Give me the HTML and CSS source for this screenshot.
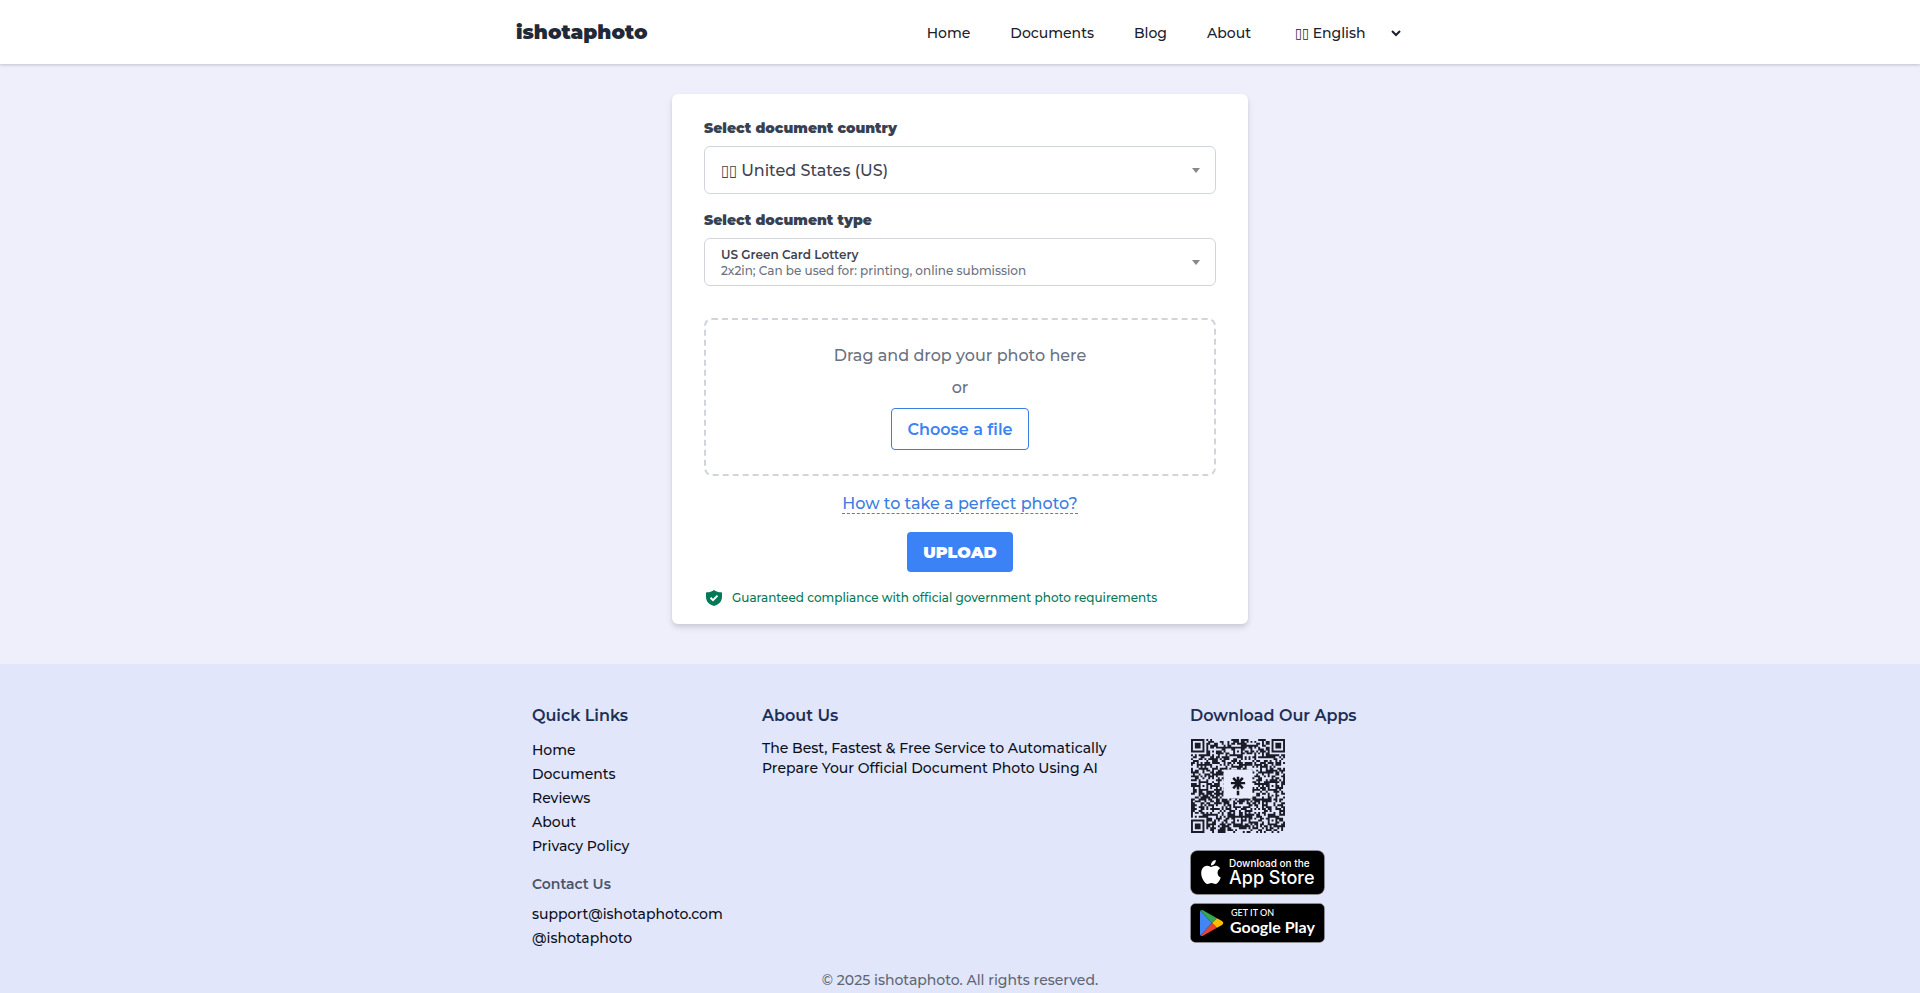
FILE: index.html
```
<!DOCTYPE html>
<html lang="en">
<head>
    <meta charset="UTF-8">
    <meta name="viewport" content="width=device-width, initial-scale=1.0">
    <title>ishotaphoto</title>
    <link rel="stylesheet" href="styles.css">
</head>
<body>
    <header class="header">
        <div class="header-inner">
            <a class="logo" href="#">ishotaphoto</a>
            <nav class="nav">
                <a href="#">Home</a>
                <a href="#">Documents</a>
                <a href="#">Blog</a>
                <a href="#">About</a>
                <select class="language" aria-label="Language">
                    <option>▯▯ English</option>
                </select>
            </nav>
        </div>
    </header>

    <main class="main">
        <form class="card">
            <label class="field-label" for="country">Select document country</label>
            <div class="field">
                <select id="country" class="field-select">
                    <option>▯▯ United States (US)</option>
                </select>
                <span class="field-arrow"></span>
            </div>

            <label class="field-label" for="docType">Select document type</label>
            <div class="field">
                <select id="docType" class="field-select field-select-small">
                    <option>US Green Card Lottery</option>
                </select>
                <span class="field-note">2x2in; Can be used for: printing, online submission</span>
                <span class="field-arrow"></span>
            </div>

            <div class="dropzone">
                <p>Drag and drop your photo here</p>
                <p>or</p>
                <button type="button" class="choose-button">Choose a file</button>
            </div>

            <div class="actions">
                <a class="help-link" href="#">How to take a perfect photo?</a>
                <button type="submit" class="upload-button">UPLOAD</button>
            </div>

            <div class="guarantee">
                <svg width="18" height="18" viewBox="0 0 18 18" aria-hidden="true">
                    <path fill="#047857" d="M9 1C7 2.600 4.500 3.300 1.700 3.300Q1 3.300 1 4V7.500C1 12.200 3.600 15.500 9 17C14.400 15.500 17 12.200 17 7.500V4Q17 3.300 16.300 3.300C13.500 3.300 11 2.600 9 1Z"/>
                    <path fill="none" stroke="#fff" stroke-width="2" d="M5.500 8.800L8 11.200L12.500 6.600"/>
                </svg>
                <span>Guaranteed compliance with official government photo requirements</span>
            </div>
        </form>
    </main>

    <footer class="footer">
        <div class="footer-inner">
            <div>
                <h2>Quick Links</h2>
                <ul class="links">
                    <li><a href="#">Home</a></li>
                    <li><a href="#">Documents</a></li>
                    <li><a href="#">Reviews</a></li>
                    <li><a href="#">About</a></li>
                    <li><a href="#">Privacy Policy</a></li>
                </ul>
                <h3>Contact Us</h3>
                <ul class="links">
                    <li><a href="#">support@ishotaphoto.com</a></li>
                    <li><a href="#">@ishotaphoto</a></li>
                </ul>
            </div>
            <div>
                <h2>About Us</h2>
                <p class="about">The Best, Fastest &amp; Free Service to Automatically Prepare Your Official Document Photo Using AI</p>
            </div>
            <div class="apps">
                <h2>Download Our Apps</h2>
                <svg class="qr" viewBox="0 0 49 49" role="img" aria-label="QR code">
                    <path id="qrModules" fill="#1b1c28"/>
                    <rect x="17" y="16" width="15" height="15" fill="#e7ebfb"/>
                    <path stroke="#14151f" stroke-width="1.300" d="M24.500 19.700V26.300M20.800 23H28.200M22 20.300L27 25.700M27 20.300L22 25.700M24.500 27V29.300"/>
                </svg>
                <a href="#" aria-label="Download on the App Store">
                    <svg class="badge" viewBox="0 0 135 45">
                        <rect x="0.500" y="0.500" width="134" height="44" rx="7" fill="#000" stroke="#a6a6a6" stroke-width="0.500"/>
                        <path transform="translate(9 10)" fill="#fff" d="M12.152 6.896c-.948 0-2.415-1.078-3.960-1.040-2.040.027-3.910 1.183-4.961 3.014-2.117 3.675-.546 9.103 1.519 12.090 1.013 1.454 2.208 3.090 3.792 3.039 1.520-.065 2.090-.987 3.935-.987 1.831 0 2.350.987 3.960.948 1.637-.026 2.676-1.480 3.676-2.948 1.156-1.688 1.636-3.325 1.662-3.415-.039-.013-3.182-1.221-3.220-4.857-.026-3.040 2.480-4.494 2.597-4.559-1.429-2.090-3.623-2.324-4.390-2.376-2-.156-3.675 1.090-4.610 1.090zM15.530 3.830c.843-1.012 1.400-2.427 1.245-3.830-1.207.052-2.662.805-3.532 1.818-.780.896-1.454 2.338-1.273 3.714 1.338.104 2.715-.688 3.559-1.701"/>
                        <text class="badge-small" x="39" y="17">Download on the</text>
                        <text class="badge-big" x="39" y="34">App Store</text>
                    </svg>
                </a>
                <a href="#" aria-label="Get it on Google Play">
                    <svg class="badge" viewBox="0 0 135 40">
                        <rect x="0.500" y="0.500" width="134" height="39" rx="5" fill="#000" stroke="#a6a6a6" stroke-width="0.500"/>
                        <path fill="#4285f4" d="M10.500 7.500Q10 8 10 9V31Q10 32 10.500 32.500L22 20Z"/>
                        <path fill="#34a853" d="M10.500 7.500Q11.500 6.500 13 7.300L27 15.200L22 20Z"/>
                        <path fill="#ea4335" d="M10.500 32.500Q11.500 33.500 13 32.700L27 24.800L22 20Z"/>
                        <path fill="#fbbc04" d="M27 15.200L32 18Q34.500 20 32 22L27 24.800L22 20Z"/>
                        <text class="badge-get" x="41" y="13">GET IT ON</text>
                        <text class="badge-play" x="40" y="30">Google Play</text>
                    </svg>
                </a>
            </div>
        </div>
        <p class="copyright">© 2025 ishotaphoto. All rights reserved.</p>
    </footer>

    <script src="script.js"></script>
</body>
</html>
```
FILE: styles.css
```
* {
    box-sizing: border-box;
}

body {
    margin: 0;
    font-family: Montserrat, "DejaVu Sans Condensed", Inter, sans-serif;
    font-size: 14px;
    line-height: 24px;
    font-weight: 500;
    color: #1a202c;
    background-color: #eeeffb;
}

a {
    color: inherit;
    text-decoration: none;
}

h2, h3, p, ul {
    margin: 0;
    padding: 0;
}

select, button {
    font-family: inherit;
    font-weight: inherit;
}

/* Header */
.header {
    background-color: #fff;
    box-shadow: 0 1px 3px rgba(0, 0, 0, 0.2);
}

.header-inner {
    display: flex;
    justify-content: space-between;
    align-items: center;
    max-width: 888px;
    height: 64px;
    margin: 0 auto;
}

.logo {
    font-size: 20px;
    font-weight: 900;
    color: #1f2937;
}

.nav {
    display: flex;
    align-items: center;
    gap: 40px;
    padding-top: 2px;
}

.language {
    width: 113px;
    border: none;
    background: none;
    font-size: 14px;
    color: #1a202c;
}

/* Upload card */
.main {
    padding: 30px 16px 40px;
}

.card {
    max-width: 576px;
    margin: 0 auto;
    padding: 22px 32px 14px;
    border-radius: 6px;
    background-color: #fff;
    box-shadow: 0 4px 6px rgba(0, 0, 0, 0.1), 0 2px 4px rgba(0, 0, 0, 0.06);
}

.field-label {
    display: block;
    margin-bottom: 6px;
    line-height: 24px;
    font-weight: 900;
    color: #374151;
}

.field {
    display: grid;
    align-items: center;
    height: 48px;
    margin-bottom: 14px;
    border: 1px solid #d1d5db;
    border-radius: 6px;
}

.field > * {
    grid-area: 1 / 1;
}

.field-select {
    appearance: none;
    width: 100%;
    height: 100%;
    padding: 0 36px 0 16px;
    border: none;
    background: none;
    font-size: 16px;
    color: #3f4350;
}

.field-select-small {
    padding-bottom: 16px;
    font-size: 12px;
    font-weight: 600;
}

.field-note {
    padding: 18px 36px 0 16px;
    font-size: 12px;
    line-height: 16px;
    color: #6b7280;
    pointer-events: none;
}

.field-arrow {
    justify-self: end;
    margin-right: 15px;
    border-top: 5px solid #888;
    border-left: 4px solid transparent;
    border-right: 4px solid transparent;
    pointer-events: none;
}

.dropzone {
    display: flex;
    flex-direction: column;
    align-items: center;
    gap: 8px;
    margin-top: 32px;
    padding: 24px 16px;
    border: 2px dashed #d1d5db;
    border-radius: 8px;
    font-size: 16px;
    color: #6b7280;
}

.choose-button {
    height: 42px;
    padding: 0 16px;
    border: 1px solid #3b7de0;
    border-radius: 4px;
    background-color: #fff;
    font-size: 16px;
    font-weight: 600;
    color: #3b82f6;
}

.actions {
    display: flex;
    flex-direction: column;
    align-items: center;
    gap: 18px;
    padding: 18px 0 14px;
}

.help-link {
    border-bottom: 1px dashed #3b82f6;
    font-size: 16px;
    line-height: 19px;
    color: #3b7de0;
}

.upload-button {
    height: 40px;
    padding: 0 16px;
    border: none;
    border-radius: 4px;
    background-color: #3b82f6;
    font-size: 16px;
    font-weight: 900;
    color: #fff;
}

.guarantee {
    display: flex;
    align-items: center;
    gap: 9px;
    padding-left: 1px;
    font-size: 12px;
    color: #047857;
}

/* Footer */
.footer {
    padding: 40px 16px 1px;
    background-color: #e1e6fa;
    color: #0b0f19;
}

.footer-inner {
    display: grid;
    grid-template-columns: 230fr 428fr 198fr;
    max-width: 856px;
    margin: 0 auto;
}

.footer h2 {
    margin-bottom: 10px;
    font-size: 16px;
    line-height: 24px;
    font-weight: 600;
    color: #1e2f55;
}

.footer h3 {
    margin: 14px 0 6px;
    font-size: 14px;
    line-height: 24px;
    font-weight: 600;
    color: #4a5568;
}

.links {
    list-style: none;
}

.about {
    max-width: 360px;
    line-height: 20px;
}

.apps {
    display: flex;
    flex-direction: column;
    align-items: flex-start;
}

.qr {
    width: 94px;
    margin: 1px 1px 17px;
}

.badge {
    display: block;
    width: 135px;
    margin-bottom: 8px;
}

.badge text {
    font-family: Inter, sans-serif;
    fill: #fff;
}

.badge-small {
    font-size: 10px;
}

.badge-big {
    font-size: 18px;
}

.badge .badge-get {
    font-family: Lato, sans-serif;
    font-size: 9px;
}

.badge .badge-play {
    font-family: Lato, sans-serif;
    font-size: 16px;
    font-weight: 700;
}

.copyright {
    margin-top: 17px;
    text-align: center;
    color: #5f6675;
}
```
FILE: script.js
```
const size = 49;

// Finder pattern: 7x7 ring with a 3x3 core, returns null outside the corners
function finder(x, y) {
    const corners = [[0, 0], [size - 7, 0], [0, size - 7]];
    for (const [cx, cy] of corners) {
        const dx = x - cx;
        const dy = y - cy;
        if (dx < -1 || dx > 7 || dy < -1 || dy > 7) continue;
        const ring = Math.max(Math.abs(dx - 3), Math.abs(dy - 3));
        return ring !== 2 && ring !== 4;
    }
    return null;
}

function alignment(x, y) {
    for (const cx of [6, 24, 42]) {
        for (const cy of [6, 24, 42]) {
            const ring = Math.max(Math.abs(x - cx), Math.abs(y - cy));
            if (ring <= 2) return ring !== 1;
        }
    }
    return null;
}

let seed = 20257;
function randomBit() {
    seed = (seed * 1103515245 + 12345) % 2147483648;
    return seed / 2147483648 < 0.52;
}

let path = '';
for (let y = 0; y < size; y++) {
    for (let x = 0; x < size; x++) {
        const bit = randomBit();
        const dark = finder(x, y) ?? alignment(x, y) ?? bit;
        if (dark) path += `M${x} ${y}h1v1h-1z`;
    }
}
document.getElementById('qrModules').setAttribute('d', path);
```
